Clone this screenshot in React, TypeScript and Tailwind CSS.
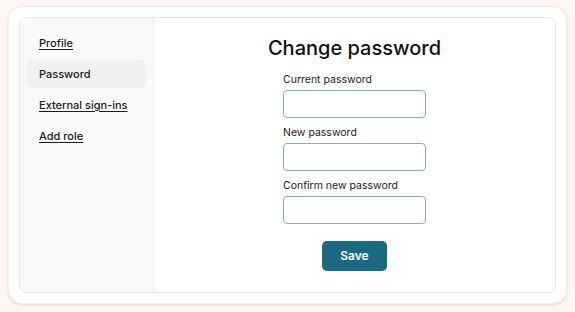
import React from 'react';

const links = [
  { label: 'Profile', active: false },
  { label: 'Password', active: true },
  { label: 'External sign-ins', active: false },
  { label: 'Add role', active: false },
];

const fields = ['Current password', 'New password', 'Confirm new password'];

export default function App() {
  return (
    <div className="w-[575px] h-[312px] bg-[#fdf6f2] pt-[6px] px-[8px] pb-[8px] font-['Inter',sans-serif] text-[#1c1c1c]">
      <div className="h-full bg-white rounded-[14px] border border-[#f3eeeb] shadow-[0_1px_3px_rgba(0,0,0,0.12)] p-[10px]">
        <div className="h-full flex rounded-[7px] border border-[#e6e6e6] overflow-hidden">
          {/* sidebar */}
          <nav className="w-[134px] shrink-0 bg-[#f9f9f9] border-r border-[#ebebeb] pt-[11px] pl-[7px] pr-[7px] flex flex-col gap-[3px]">
            {links.map((l) => (
              <a
                key={l.label}
                href="#"
                className={`h-[28px] flex items-center px-[12px] rounded-[6px] text-[11px] font-medium ${
                  l.active ? 'bg-[#f0f0f0] no-underline' : 'underline underline-offset-2'
                }`}
              >
                {l.label}
              </a>
            ))}
          </nav>

          {/* form */}
          <main className="flex-1 flex flex-col items-center pt-[16px]">
            <h1 className="text-[20px] leading-[28px] font-medium text-[#111] mb-[11px]">Change password</h1>
            <form className="w-[143px] flex flex-col gap-[8px]">
              {fields.map((f) => (
                <label key={f} className="flex flex-col gap-[3px]">
                  <span className="text-[10.5px] leading-[14px] text-[#222]">{f}</span>
                  <input
                    type="password"
                    className="h-[28px] w-full rounded-[4px] border border-[#7fb1c1] bg-white outline-none"
                  />
                </label>
              ))}
              <button
                type="button"
                className="mt-[9px] self-center w-[65px] h-[30px] rounded-[5px] bg-[#1b6a84] text-white text-[12px] font-semibold"
              >
                Save
              </button>
            </form>
          </main>
        </div>
      </div>
    </div>
  );
}
